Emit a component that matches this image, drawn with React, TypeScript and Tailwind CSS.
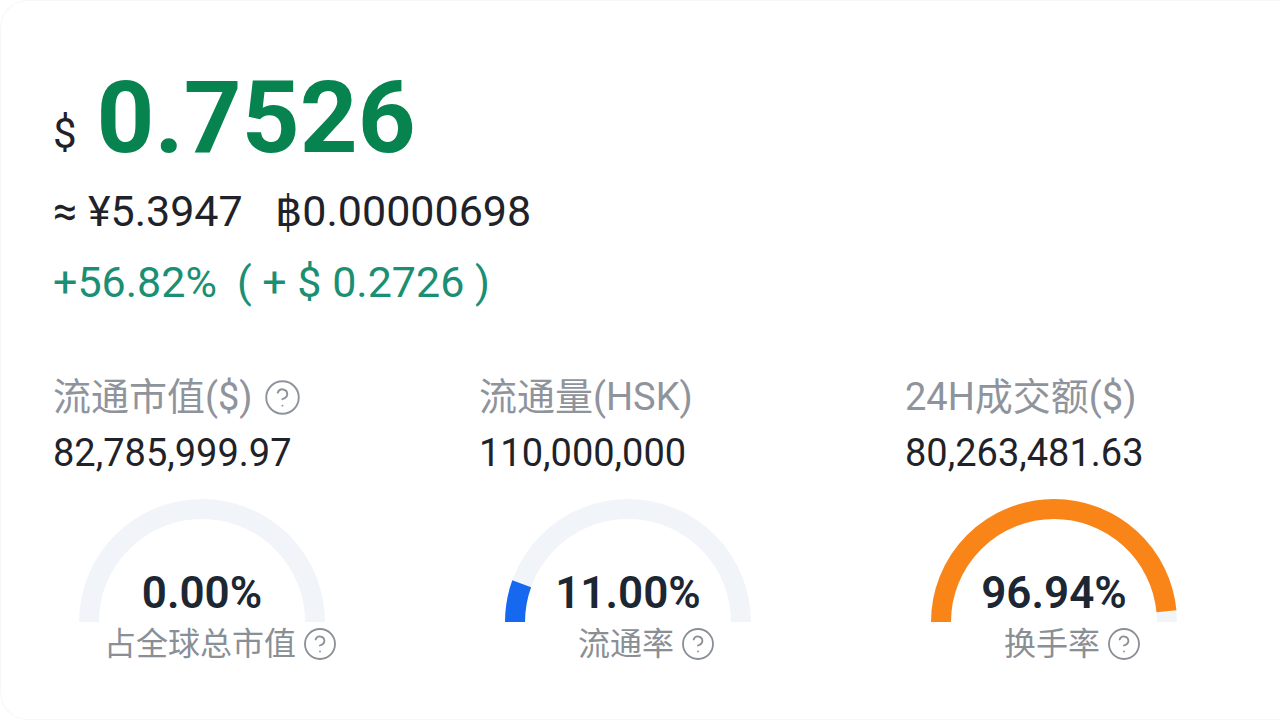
import { CircleHelp } from "lucide-react";

type Stat = {
  label: string;
  value: string;
  helpOnLabel?: boolean;
  percent: number;
  percentText: string;
  gaugeLabel: string;
  color: string;
};

const stats: Stat[] = [
  {
    label: "流通市值($)",
    value: "82,785,999.97",
    helpOnLabel: true,
    percent: 0,
    percentText: "0.00%",
    gaugeLabel: "占全球总市值",
    color: "#1668f0",
  },
  {
    label: "流通量(HSK)",
    value: "110,000,000",
    percent: 11,
    percentText: "11.00%",
    gaugeLabel: "流通率",
    color: "#1668f0",
  },
  {
    label: "24H成交额($)",
    value: "80,263,481.63",
    percent: 96.94,
    percentText: "96.94%",
    gaugeLabel: "换手率",
    color: "#f98518",
  },
];

const font = { fontFamily: 'Roboto, "Noto Sans CJK SC", sans-serif' };

export default function App() {
  return (
    <div className="flex h-[720px] w-[1280px] overflow-hidden bg-white" style={font}>
      <div className="h-[720px] w-full rounded-l-[28px] border border-r-0 border-[#f7f7f7] bg-white pl-[52px] pt-[66px]">
        <div className="flex items-baseline gap-[20px]">
          <span className="relative -top-[4px] text-[42px] leading-none text-[#1f2329]">$</span>
          <span className="text-[101px] font-bold leading-none text-[#06834f]">0.7526</span>
        </div>
        <p className="mt-[18px] text-[43px] leading-[50px] text-[#1f2329]">
          ≈ ¥5.3947 <span className="ml-[22px]">฿0.00000698</span>
        </p>
        <p className="mt-[22px] text-[43px] leading-[48px] text-[#1b8f73]">
          +56.82%<span className="ml-[20px]">( + $ 0.2726 )</span>
        </p>

        <div className="mt-[71px] grid grid-cols-[426px_426px_426px]">
          {stats.map((s) => (
            <StatColumn key={s.label} stat={s} />
          ))}
        </div>
      </div>
    </div>
  );
}

function StatColumn({ stat }: { stat: Stat }) {
  return (
    <div>
      <div className="flex items-center gap-[10px] text-[38px] leading-[40px] text-[#8f949c]">
        <span>{stat.label}</span>
        {stat.helpOnLabel && <CircleHelp size={39} strokeWidth={1.2} />}
      </div>
      <p className="mt-[14px] text-[38px] leading-[44px] text-[#1f2329]">{stat.value}</p>
      <div className="relative ml-[26px] mt-[23px] h-[124px] w-[246px]">
        <Gauge percent={stat.percent} color={stat.color} />
        <p className="absolute inset-x-0 bottom-[7px] text-center text-[44px] font-semibold leading-none text-[#1d2733]">
          {stat.percentText}
        </p>
      </div>
      <div className="ml-[26px] mt-[2px] flex w-[246px] justify-center whitespace-nowrap pl-[38px] text-[32px] leading-[40px] text-[#8a8f96]">
        <span className="flex items-center gap-[6px]">
          {stat.gaugeLabel}
          <CircleHelp size={36} strokeWidth={1.2} />
        </span>
      </div>
    </div>
  );
}

function Gauge({ percent, color }: { percent: number; color: string }) {
  const d = "M 10 124 A 113 113 0 0 1 236 124";
  return (
    <svg width="246" height="124" viewBox="0 0 246 124" className="block">
      <path d={d} fill="none" stroke="#f1f5fa" strokeWidth="20" />
      {percent > 0 && (
        <path
          d={d}
          fill="none"
          stroke={color}
          strokeWidth="20"
          pathLength={100}
          strokeDasharray={`${percent} 100`}
        />
      )}
    </svg>
  );
}
